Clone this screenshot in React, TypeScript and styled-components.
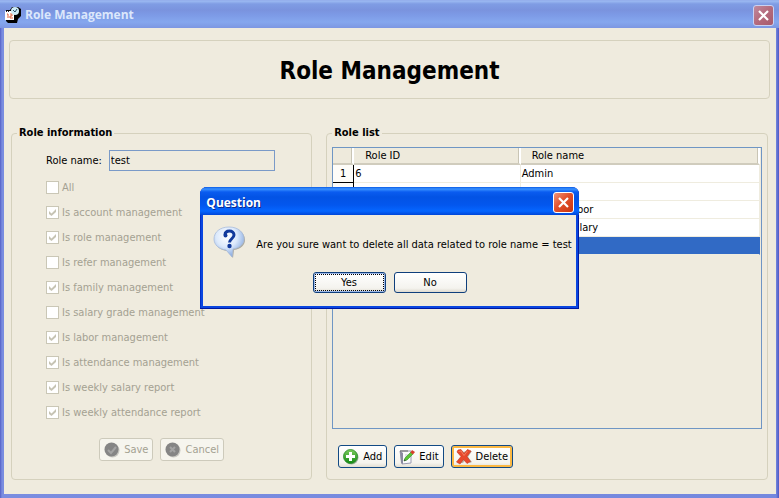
import React from "react";
import styled, { createGlobalStyle, css } from "styled-components";

const uiFont = `"DejaVu Sans Condensed", "Noto Sans", sans-serif`;
const titleFont = `"Open Sans", "Noto Sans", sans-serif`;

const GlobalStyle = createGlobalStyle`
  * { box-sizing: border-box; }
  body {
    margin: 0;
    background: #efebde;
    font: 11px/14px ${uiFont};
    color: #000;
  }
  button, input { font: inherit; color: inherit; }
`;

const Window = styled.div`
  min-height: 100vh;
  display: flex;
  flex-direction: column;
  background: linear-gradient(90deg, #5560c6 0, #7a8de0 2px, #7488de calc(100% - 3px), #4f58c4 100%);
`;

const TitleBar = styled.header<{ $active?: boolean }>`
  display: flex;
  align-items: center;
  height: 28px;
  flex: none;
  font: bold 12px/18px ${titleFont};
  ${(p) =>
    p.$active
      ? css`
          padding: 3px 5px 0 6px;
          color: #fff;
          text-shadow: 1px 1px 0 #0a2a8c;
          background: linear-gradient(#0a5be6 0, #3a92ff 2px, #0a5cf0 5px, #0353e4 10px, #0357ee 18px, #0566ff 24px, #0046d8 100%);
        `
      : css`
          padding: 2px 5px 0 5px;
          color: #dce7fb;
          background: linear-gradient(#8ea6e8 0, #9cbaf2 1px, #7f9ce4 4px, #7a93de 10px, #7d9ae6 15px, #85a7ee 22px, #7d97e2 100%);
        `}
`;

const TitleText = styled.h2<{ $gap?: boolean }>`
  flex: 1;
  margin: 0 0 0 ${(p) => (p.$gap ? "3px" : "0")};
  font: inherit;
`;

const CloseButton = styled.button<{ $active?: boolean }>`
  width: 21px;
  height: 21px;
  padding: 0;
  display: grid;
  place-items: center;
  border: 1px solid ${(p) => (p.$active ? "#fff" : "#c9d2f2")};
  border-radius: 3px;
  background: ${(p) =>
    p.$active
      ? "linear-gradient(135deg, #f0947a, #e2512c 45%, #c93410)"
      : "linear-gradient(135deg, #c08a9e, #b46a7c 50%, #a85a6c)"};
`;

const Client = styled.main`
  flex: 1;
  display: flex;
  flex-direction: column;
  margin: 0 3px 4px 4px;
  padding: 12px 6px 14px 5px;
  background: #efebde;
`;

const Banner = styled.div`
  display: grid;
  place-items: center;
  height: 59px;
  padding-top: 2px;
  border: 1px solid #d5d1bd;
  border-radius: 4px;
`;

const Heading = styled.h1`
  margin: 0;
  font: bold 24px/30px ${uiFont};
`;

const Columns = styled.div`
  flex: 1;
  display: grid;
  grid-template-columns: 15fr 22fr;
  gap: 14px;
  padding: 27px 2px 0;
`;

const Group = styled.fieldset`
  min-width: 0;
  margin: 0;
  padding: 0 5px 11px;
  display: flex;
  flex-direction: column;
  border: 1px solid #d5d1bd;
  border-radius: 4px;
`;

const Legend = styled.legend`
  padding: 0 2px;
  font-weight: bold;
`;

const Form = styled.div`
  display: flex;
  flex-direction: column;
  padding: 10px 31px 0 29px;
`;

const NameRow = styled.div`
  display: flex;
  align-items: center;
  gap: 7px;
`;

const NameInput = styled.input`
  flex: 1;
  min-width: 0;
  height: 21px;
  padding: 0 1px;
  border: 1px solid #7a9ac8;
  border-radius: 0;
  background: transparent;
  outline: none;
`;

const CheckList = styled.div`
  display: flex;
  flex-direction: column;
  margin-top: 4px;
`;

const CheckLabel = styled.label`
  display: flex;
  align-items: center;
  gap: 3px;
  height: 25px;
  color: #a4a192;
  white-space: nowrap;
`;

const TickBox = styled.span`
  display: inline-grid;
  width: 13px;
  height: 13px;
  flex: none;

  > * {
    grid-area: 1 / 1;
  }
  svg {
    pointer-events: none;
  }
`;

const CheckBox = styled.input`
  appearance: none;
  margin: 0;
  width: 13px;
  height: 13px;
  border: 1px solid #cac7b6;
  background: #fff;
`;

const ButtonRow = styled.div<{ $place: "form" | "list" }>`
  display: flex;
  gap: 7px;
  ${(p) =>
    p.$place === "form"
      ? css`
          justify-content: center;
          margin: 13px 0 0;
        `
      : css`
          padding: 16px 6px 0;
        `}
`;

const ToolButton = styled.button<{ $hot?: boolean }>`
  display: inline-flex;
  align-items: center;
  gap: 4px;
  height: 23px;
  padding: 0 4px;
  border: 1px solid #124a84;
  border-radius: 3px;
  background: linear-gradient(#fff, #f5f4ee 80%, #e3dfd3);
  box-shadow: ${(p) => (p.$hot ? "inset 0 0 0 2px #fbb843" : "none")};

  &:disabled {
    color: #a4a192;
    border-color: #cdcabb;
    background: #f6f5ee;
  }
`;

const TableFrame = styled.div`
  flex: 1;
  margin-top: 7px;
  padding-right: 1px;
  border: 1px solid #6f96c4;
`;

const RoleTable = styled.table`
  width: 100%;
  table-layout: fixed;
  border-collapse: separate;
  border-spacing: 0;

  th, td {
    height: 18px;
    padding: 0 1px;
    font-weight: normal;
    text-align: left;
    white-space: nowrap;
    overflow: hidden;
  }
`;

const NumberCol = styled.col`
  width: 21px;
`;
const IdCol = styled.col`
  width: 39%;
`;

const HeadCell = styled.th`
  && {
    height: 17px;
    padding: 0 11px;
    border-right: 2px solid #fff;
    border-bottom: 2px solid #d0ccbd;
    box-shadow: inset -1px 0 0 #c9c5b5;
    background: #eeeadc;
  }
`;

const NumberCell = styled.th`
  && {
    padding: 0;
    text-align: center;
    border-right: 1px solid #000;
    border-bottom: 1px solid #000;
    background: #fdfcf8;
  }
`;

const Cell = styled.td<{ $selected?: boolean }>`
  background: ${(p) => (p.$selected ? "#316ac5" : "#fff")};
  color: ${(p) => (p.$selected ? "#fff" : "#000")};
  border-right: 1px solid ${(p) => (p.$selected ? "#316ac5" : "#efecdf")};
  border-bottom: 1px solid #efecdf;
`;

const Overlay = styled.div`
  position: fixed;
  inset: 0;
  display: grid;
  place-items: center;
  padding-bottom: 2px;
`;

const Dialog = styled.section`
  border-radius: 7px 7px 0 0;
  overflow: hidden;
  background: #0a46e0;
  box-shadow: inset -1px -1px 0 #0018a0, inset 1px 0 0 #0030c8;
`;

const DialogBody = styled.div`
  margin: 0 3px 3px;
  padding: 11px 4px 13px;
  background: #efebde;
`;

const Message = styled.div`
  display: flex;
  align-items: center;
  gap: 10px;
  margin-left: 6px;

  p {
    margin: 4px 0 0;
  }
`;

const DialogButtons = styled.div`
  display: flex;
  justify-content: center;
  gap: 8px;
  margin-top: 13px;
`;

const DialogButton = styled.button<{ $default?: boolean }>`
  width: 73px;
  height: 21px;
  padding: 0;
  border: 1px solid #0f3f7c;
  border-radius: 3px;
  background: linear-gradient(#fff, #f4f3ee 80%, #dedacf);
  box-shadow: ${(p) => (p.$default ? "inset 0 0 0 1px #9db8e8" : "none")};
  outline: ${(p) => (p.$default ? "1px dotted #000" : "none")};
  outline-offset: -3px;
`;

function CloseMark() {
  return (
    <svg width="13" height="13" viewBox="0 0 13 13" aria-hidden="true">
      <path d="M2 2l9 9M11 2l-9 9" stroke="#fff" strokeWidth="2.2" />
    </svg>
  );
}

function AppIcon() {
  return (
    <svg width="17" height="17" viewBox="0 0 17 17" aria-hidden="true">
      <path d="M1 3h4l2-3h6l3 2v7l-3 3-1 4H3l-2-2z" fill="#000" />
      <path d="M0 4h9v9H0z" fill="#fff" />
      <path d="M1 4h1v1H1zM3 4h1v1H3z" fill="#223" />
      <path d="M2 7h1v4M5 7h2v2H5v2h3" fill="none" stroke="#e0603a" />
      <circle cx="10" cy="4" r="4" fill="#cdebf6" />
      <path d="M8 3l2 2 2-3" fill="none" stroke="#27506a" />
    </svg>
  );
}

function Tick() {
  return (
    <svg width="13" height="13" viewBox="0 0 13 13" aria-hidden="true">
      <path d="M3 5l2.5 2.5L10 3v3L5.5 10 3 8z" fill="#c6c3b3" />
    </svg>
  );
}

function RoundIcon({ mark }: { mark: "tick" | "cross" }) {
  return (
    <svg width="16" height="16" viewBox="0 0 16 16" aria-hidden="true">
      <circle cx="8.5" cy="8.5" r="7" fill="#c9c8c2" />
      <circle cx="7.5" cy="7.5" r="7" fill="#858585" />
      <path
        d={mark === "tick" ? "M4 8l3 3 5-6" : "M5 5l5 5M10 5l-5 5"}
        fill="none"
        stroke="#a4a4a4"
        strokeWidth="2"
      />
    </svg>
  );
}

function AddIcon() {
  return (
    <svg width="16" height="16" viewBox="0 0 16 16" aria-hidden="true">
      <defs>
        <linearGradient id="addGreen" x1="0" y1="0" x2="0" y2="1">
          <stop offset="0" stopColor="#7ccb5c" />
          <stop offset="1" stopColor="#128a12" />
        </linearGradient>
      </defs>
      <circle cx="8.5" cy="8.5" r="7" fill="#9fb69c" />
      <circle cx="7.5" cy="7.5" r="7" fill="url(#addGreen)" stroke="#2a8a2a" strokeWidth="0.8" />
      <path d="M6 3h3v3h3v3H9v3H6V9H3V6h3z" fill="#fff" />
    </svg>
  );
}

function EditIcon() {
  return (
    <svg width="16" height="16" viewBox="0 0 16 16" aria-hidden="true">
      <path d="M1 2h11v12L3 15z" fill="#fbfbfd" stroke="#9a9ab0" />
      <path d="M1 2l3 2v11l-2-1z" fill="#8a8aa0" />
      <path d="M2 1v2M4 1v2M6 1v2M8 1v2" stroke="#666" />
      <path d="M6 6h3M6 8h2" stroke="#c8c8d8" />
      <path d="M5 12l1-3 6-6 2 2-6 6z" fill="#5cc436" stroke="#2f8f22" strokeWidth="0.6" />
      <path d="M11.5 3.5l1.5-2.5 3 2-2 2.5z" fill="#d8402c" />
      <path d="M5 12l.6-1.8 1.2 1.2z" fill="#333" />
    </svg>
  );
}

function DeleteIcon() {
  return (
    <svg width="16" height="16" viewBox="0 0 16 16" aria-hidden="true">
      <path d="M3 3l4 5-4 6h4l3-4 4 4 2-1-4-5 4-6" fill="#b9b4a8" />
      <path
        d="M2 1l3-.5 3 4 3.500-4L15 2l-4 5.500 3.500 5-3.500 2-3.500-4L4 15l-3.500-2L5 7.500 1 3z"
        fill="#e8482c"
        stroke="#c23820"
        strokeWidth="0.6"
        strokeLinejoin="round"
      />
      <path d="M2.500 2.500L5 2l3 4.500L11.500 2" fill="none" stroke="#f47c5e" />
    </svg>
  );
}

function QuestionIcon() {
  return (
    <svg width="33" height="33" viewBox="0 0 33 33" role="img" aria-label="Question">
      <defs>
        <radialGradient id="bubble" cx="0.42" cy="0.32" r="0.7">
          <stop offset="0" stopColor="#fff" />
          <stop offset="0.5" stopColor="#dce9fb" />
          <stop offset="1" stopColor="#7fa4de" />
        </radialGradient>
      </defs>
      <path
        d="M17 2C8 2 2 7 2 14c0 6 5 10 12 11l6 7 1-8c7-1 11-5 11-10C32 7 26 2 17 2z"
        fill="#a9a89e"
      />
      <path
        d="M16 1C7 1 1 6 1 13c0 6 5 10 12 11l6 7 1-8c7-1 11-5 11-10C31 6 25 1 16 1z"
        fill="url(#bubble)"
        stroke="#a9bcdc"
        strokeWidth="0.8"
      />
      <path
        d="M12 9c0-3 2-4 4.500-4S21 6.500 21 9c0 3.500-4.500 4-4.500 7.500"
        fill="none"
        stroke="#123a9c"
        strokeWidth="3"
      />
      <circle cx="12.5" cy="9.5" r="2" fill="#123a9c" />
      <circle cx="16.5" cy="20" r="2.2" fill="#123a9c" />
    </svg>
  );
}

const permissions: [string, boolean][] = [
  ["All", false],
  ["Is account management", true],
  ["Is role management", true],
  ["Is refer management", false],
  ["Is family management", true],
  ["Is salary grade management", false],
  ["Is labor management", true],
  ["Is attendance management", true],
  ["Is weekly salary report", true],
  ["Is weekly attendance report", true],
];

const roles = [
  { id: 6, name: "Admin" },
  { id: 7, name: "User" },
  { id: 8, name: "Manager labor" },
  { id: 9, name: "Manager salary" },
  { id: 10, name: "test", selected: true },
];

export default function App() {
  return (
    <>
      <GlobalStyle />
      <Window>
        <TitleBar>
          <AppIcon />
          <TitleText $gap>Role Management</TitleText>
          <CloseButton aria-label="Close window">
            <CloseMark />
          </CloseButton>
        </TitleBar>
        <Client>
          <Banner>
            <Heading>Role Management</Heading>
          </Banner>
          <Columns>
            <Group>
              <Legend>Role information</Legend>
              <Form>
                <NameRow>
                  <label htmlFor="role-name">Role name:</label>
                  <NameInput id="role-name" defaultValue="test" readOnly />
                </NameRow>
                <CheckList>
                  {permissions.map(([label, checked]) => (
                    <CheckLabel key={label}>
                      <TickBox>
                        <CheckBox type="checkbox" defaultChecked={checked} disabled />
                        {checked && <Tick />}
                      </TickBox>
                      {label}
                    </CheckLabel>
                  ))}
                </CheckList>
              </Form>
              <ButtonRow $place="form">
                <ToolButton disabled>
                  <RoundIcon mark="tick" />
                  Save
                </ToolButton>
                <ToolButton disabled>
                  <RoundIcon mark="cross" />
                  Cancel
                </ToolButton>
              </ButtonRow>
            </Group>
            <Group>
              <Legend>Role list</Legend>
              <TableFrame>
                <RoleTable>
                  <colgroup>
                    <NumberCol />
                    <IdCol />
                    <col />
                  </colgroup>
                  <thead>
                    <tr>
                      <HeadCell aria-label="Row" />
                      <HeadCell scope="col">Role ID</HeadCell>
                      <HeadCell scope="col">Role name</HeadCell>
                    </tr>
                  </thead>
                  <tbody>
                    {roles.map((role, i) => (
                      <tr key={role.id}>
                        <NumberCell scope="row">{i + 1}</NumberCell>
                        <Cell $selected={role.selected}>{role.id}</Cell>
                        <Cell $selected={role.selected}>{role.name}</Cell>
                      </tr>
                    ))}
                  </tbody>
                </RoleTable>
              </TableFrame>
              <ButtonRow $place="list">
                <ToolButton>
                  <AddIcon />
                  Add
                </ToolButton>
                <ToolButton>
                  <EditIcon />
                  Edit
                </ToolButton>
                <ToolButton $hot>
                  <DeleteIcon />
                  Delete
                </ToolButton>
              </ButtonRow>
            </Group>
          </Columns>
        </Client>
      </Window>
      <Overlay>
        <Dialog role="dialog" aria-labelledby="dialog-title">
          <TitleBar $active>
            <TitleText id="dialog-title">Question</TitleText>
            <CloseButton $active aria-label="Close dialog">
              <CloseMark />
            </CloseButton>
          </TitleBar>
          <DialogBody>
            <Message>
              <QuestionIcon />
              <p>Are you sure want to delete all data related to role name = test</p>
            </Message>
            <DialogButtons>
              <DialogButton $default>Yes</DialogButton>
              <DialogButton>No</DialogButton>
            </DialogButtons>
          </DialogBody>
        </Dialog>
      </Overlay>
    </>
  );
}
